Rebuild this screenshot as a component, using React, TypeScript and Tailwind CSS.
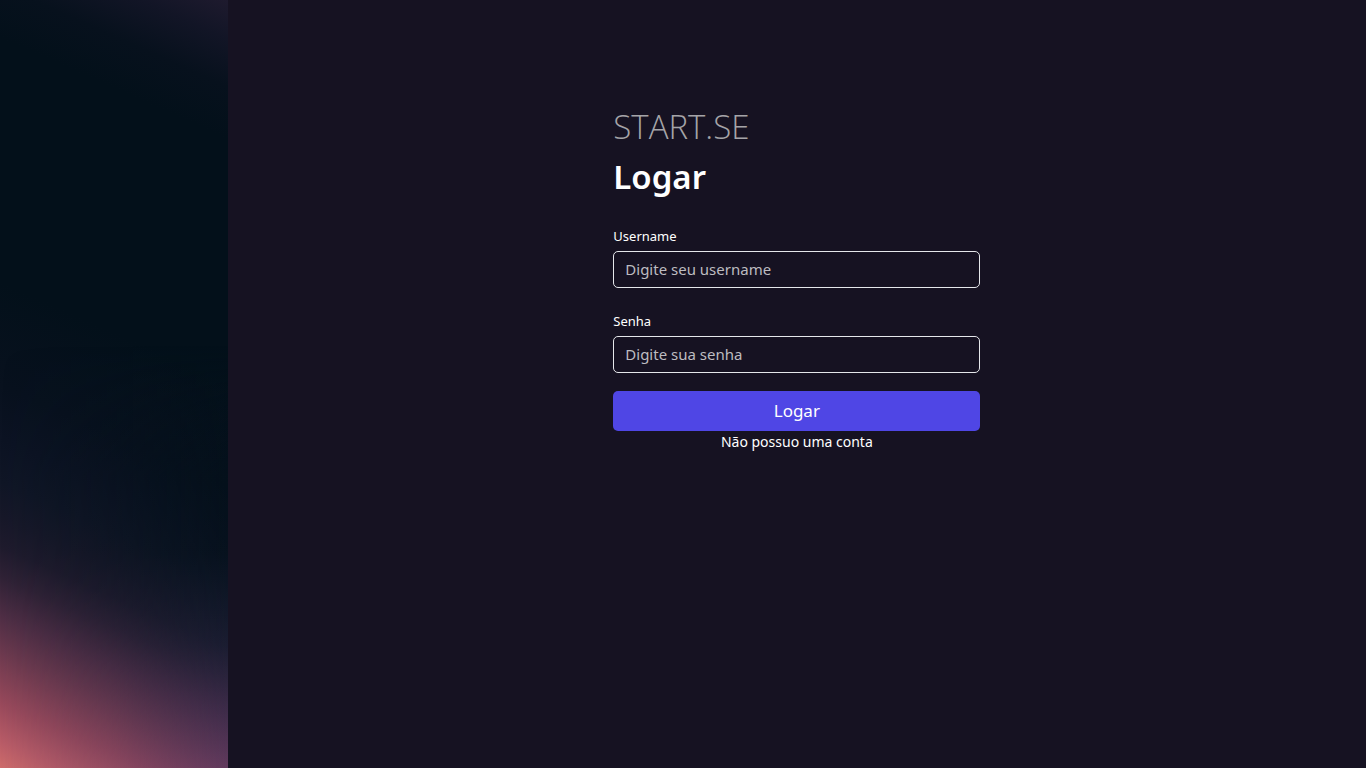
import type { InputHTMLAttributes } from "react";

type FieldProps = InputHTMLAttributes<HTMLInputElement> & { id: string; label: string };

function Field({ id, label, ...input }: FieldProps) {
  return (
    <div className="flex flex-col gap-[5px]">
      <label htmlFor={id} className="text-[13px] leading-5">
        {label}
      </label>
      <input
        id={id}
        name={id}
        className="h-[37px] w-full rounded-[5px] border border-gray-200 bg-transparent px-[11px] pb-0.5 text-[15px] text-white placeholder:text-[#bdbcc0]"
        {...input}
      />
    </div>
  );
}

function Backdrop() {
  return (
    <aside
      aria-hidden="true"
      className="flex w-1/6 shrink-0 bg-[linear-gradient(204deg,#1e1a2e_0%,#121526_4.5%,#07111d_10%,#03101a_16%,#03101a_44%,#08111e_56%,#0c1323_62%,#101626_67%,#171829_71%,#1f1b2d_74.5%,#302236_78%,#4f2e45_82.5%,#6b394e_86.5%,#98495b_92.5%,#b95c67_97%,#ce6c6b_100%)]"
    >
      <div className="flex-1 bg-[linear-gradient(to_bottom,transparent_45%,rgb(3_16_26/0.7)_62%,rgb(3_16_26/0.6)_72%,rgb(24_30_52/0.6)_84%,rgb(80_55_100/0.6)_100%)] [mask-image:linear-gradient(to_left,black,rgb(0_0_0/0.4)_50%,transparent)]" />
    </aside>
  );
}

export default function App() {
  return (
    <div className="flex min-h-screen bg-[#161222] font-['Noto_Sans',sans-serif] text-white">
      <Backdrop />
      <main className="flex flex-1 justify-center px-4 pt-[102px]">
        <div className="w-full max-w-[367px]">
          <p className="font-['Open_Sans',sans-serif] text-[33px] leading-[50px] font-light text-[#a5a4a8]">START.SE</p>
          <h1 className="text-[33px] leading-[50px] font-semibold">Logar</h1>
          <form className="mt-6 flex flex-col" onSubmit={(event) => event.preventDefault()}>
            <div className="flex flex-col gap-[23px]">
              <Field id="username" label="Username" type="text" placeholder="Digite seu username" />
              <Field id="senha" label="Senha" type="password" placeholder="Digite sua senha" />
            </div>
            <button type="submit" className="mt-[18px] h-10 rounded-[5px] bg-[#4f46e5] text-[17px]">
              Logar
            </button>
            <a href="#cadastro" className="mt-px self-center text-sm leading-5">
              Não possuo uma conta
            </a>
          </form>
        </div>
      </main>
    </div>
  );
}
